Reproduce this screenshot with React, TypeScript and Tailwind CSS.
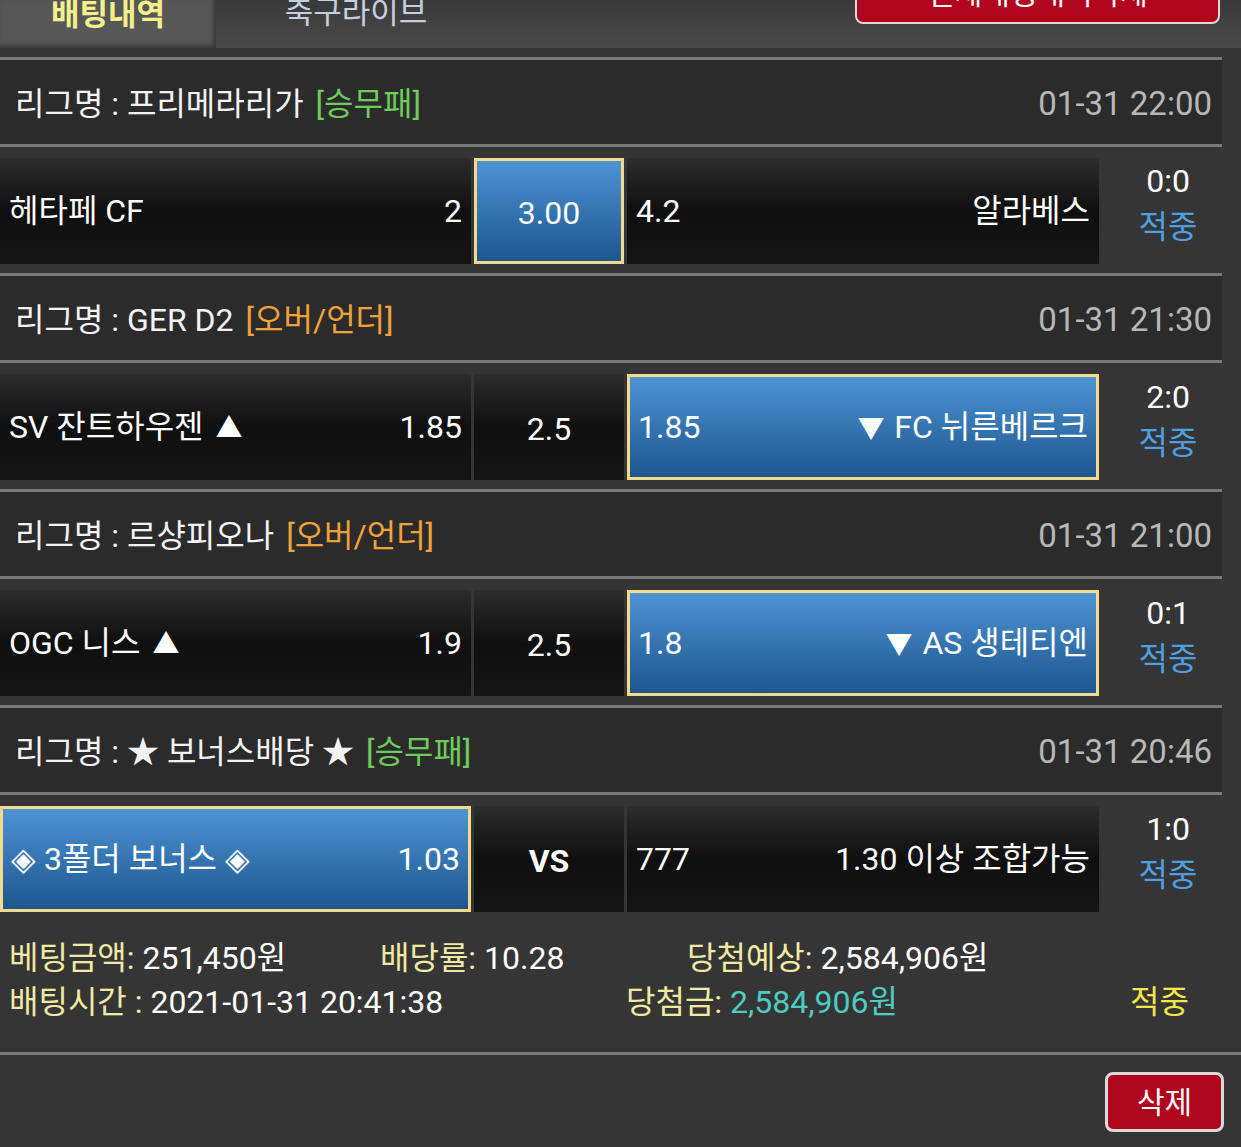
import React from 'react';

type Cell = {
  left?: React.ReactNode;
  right?: React.ReactNode;
  center?: string;
  selected?: boolean;
  bold?: boolean;
};

type Game = {
  league: string;
  tag: string;
  tagColor: string;
  time: string;
  home: Cell;
  mid: Cell;
  away: Cell;
  score: string;
};

const Up = () => <span className="ml-[4px] text-[27px]">▲</span>;
const Down = () => <span className="mr-[2px] text-[27px]">▼</span>;

const games: Game[] = [
  {
    league: '프리메라리가',
    tag: '[승무패]',
    tagColor: 'text-[#6fcb5c]',
    time: '01-31 22:00',
    home: { left: '헤타페 CF', right: '2' },
    mid: { center: '3.00', selected: true },
    away: { left: '4.2', right: '알라베스' },
    score: '0:0',
  },
  {
    league: 'GER D2',
    tag: '[오버/언더]',
    tagColor: 'text-[#f0a23a]',
    time: '01-31 21:30',
    home: { left: <>SV 잔트하우젠 <Up /></>, right: '1.85' },
    mid: { center: '2.5' },
    away: { left: '1.85', right: <><Down /> FC 뉘른베르크</>, selected: true },
    score: '2:0',
  },
  {
    league: '르샹피오나',
    tag: '[오버/언더]',
    tagColor: 'text-[#f0a23a]',
    time: '01-31 21:00',
    home: { left: <>OGC 니스 <Up /></>, right: '1.9' },
    mid: { center: '2.5' },
    away: { left: '1.8', right: <><Down /> AS 생테티엔</>, selected: true },
    score: '0:1',
  },
  {
    league: '★ 보너스배당 ★',
    tag: '[승무패]',
    tagColor: 'text-[#6fcb5c]',
    time: '01-31 20:46',
    home: { left: '◈ 3폴더 보너스 ◈', right: '1.03', selected: true },
    mid: { center: 'VS', bold: true },
    away: { left: '777', right: '1.30 이상 조합가능' },
    score: '1:0',
  },
];

function OddsCell({ cell, width }: { cell: Cell; width: string }) {
  const bg = cell.selected
    ? 'border-[3px] border-[#f3d98b] bg-gradient-to-b from-[#4d94d4] to-[#1d568f]'
    : 'bg-gradient-to-b from-[#2d2d2d] via-[#0f0f0f] to-[#151515]';
  return (
    <div className={`${width} ${bg} flex h-full items-center text-[32px] text-white`}>
      {cell.center ? (
        <span className={`w-full pt-[4px] text-center ${cell.bold ? 'font-bold' : ''}`}>{cell.center}</span>
      ) : (
        <div className={`flex w-full items-center justify-between ${cell.selected ? 'pl-[8px] pr-[8px]' : 'pl-[9px] pr-[9px]'}`}>
          <span>{cell.left}</span>
          <span>{cell.right}</span>
        </div>
      )}
    </div>
  );
}

function GameBlock({ game }: { game: Game }) {
  return (
    <div className="pb-[9px]">
      <div className="h-[3px] bg-[#7a7a7a]" />
      <div className="flex h-[84px] items-center justify-between bg-[#2b2b2b] pl-[15px] pr-[10px] pt-[3px] text-[32px]">
        <div className="text-[#f2f2f2]">
          리그명 : {game.league}
          <span className={`ml-[12px] ${game.tagColor}`}>{game.tag}</span>
        </div>
        <div className="text-[33px] text-[#b8b8b8]">{game.time}</div>
      </div>
      <div className="h-[3px] bg-[#7a7a7a]" />
      <div className="mt-[11px] flex h-[106px] gap-[3px]">
        <OddsCell cell={game.home} width="w-[471px]" />
        <OddsCell cell={game.mid} width="w-[150px]" />
        <OddsCell cell={game.away} width="w-[472px]" />
        <div className="flex flex-1 flex-col items-center pl-[12px] text-[32px] leading-[46px]">
          <span className="text-white">{game.score}</span>
          <span className="text-[#4e9fe0]">적중</span>
        </div>
      </div>
    </div>
  );
}

export default function App() {
  return (
    <div className="h-[1147px] w-[1241px] overflow-hidden bg-[#353535] font-['Roboto','Noto_Sans_CJK_KR',sans-serif]">
      {/* tabs */}
      <div className="flex h-[48px] bg-gradient-to-b from-[#393939] to-[#4a4a4a]">
        <div className="flex w-[216px] justify-center bg-[#575757] shadow-[inset_-3px_-3px_4px_rgba(0,0,0,0.35)]">
          <span className="-mt-[1px] text-[31px] font-bold leading-none text-[#f1f08a]">배팅내역</span>
        </div>
        <div className="flex w-[280px] justify-center">
          <span className="-mt-[3px] text-[31px] leading-none text-[#c3cfe0]">축구라이브</span>
        </div>
        <div className="ml-auto mr-[21px] -mt-[37px] flex h-[61px] w-[365px] items-center justify-center rounded-[8px] border-[2px] border-[#e2d6d6] bg-[#b0051c] text-[30px] text-white">
          전체배팅내역삭제
        </div>
      </div>

      {/* list */}
      <div className="mt-[9px] w-[1222px]">
        {games.map((g) => (
          <GameBlock key={g.time} game={g} />
        ))}
      </div>

      {/* summary */}
      <div className="pt-[15px] text-[32px] leading-[44px] text-white">
        <div className="flex pl-[9px]">
          <span className="w-[371px]">
            <span className="text-[#efe9a4]">베팅금액:</span> 251,450원
          </span>
          <span className="w-[307px]">
            <span className="text-[#efe9a4]">배당률:</span> 10.28
          </span>
          <span>
            <span className="text-[#efe9a4]">당첨예상:</span> 2,584,906원
          </span>
        </div>
        <div className="flex pl-[9px]">
          <span className="w-[617px]">
            <span className="text-[#efe9a4]">배팅시간 :</span> 2021-01-31 20:41:38
          </span>
          <span className="w-[504px]">
            <span className="text-[#efe9a4]">당첨금:</span> <span className="text-[#4ecbc2]">2,584,906원</span>
          </span>
          <span className="text-[#efe64a]">적중</span>
        </div>
      </div>

      <div className="mt-[28px] h-[3px] bg-[#7a7a7a]" />

      <div className="flex justify-end pr-[17px] pt-[17px]">
        <button className="flex h-[60px] w-[119px] items-center justify-center rounded-[8px] border-[3px] border-[#d9d9d9] bg-[#b0061c] text-[30px] text-white">
          삭제
        </button>
      </div>
    </div>
  );
}
